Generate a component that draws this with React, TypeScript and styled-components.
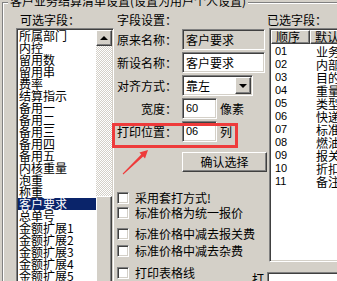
import React from 'react';
import styled, { createGlobalStyle, css } from 'styled-components';

const GlobalStyle = createGlobalStyle`
  html, body {
    margin: 0;
    padding: 0;
  }
  body {
    width: 337px;
    height: 281px;
    overflow: hidden;
    background: #d4d0c8;
    color: #000;
    font-family: 'Noto Sans CJK SC', 'Noto Sans', sans-serif;
    font-size: 12px;
  }
`;

// classic win2k bevels
const sunken = css`
  box-sizing: border-box;
  border: 1px solid;
  border-color: #808080 #fff #fff #808080;
  box-shadow: inset 1px 1px 0 #404040, inset -1px -1px 0 #d4d0c8;
  padding: 1px;
`;

const raised = css`
  box-sizing: border-box;
  border: 1px solid;
  border-color: #fff #404040 #404040 #fff;
  box-shadow: inset -1px -1px 0 #808080;
  background: #d4d0c8;
`;

const Page = styled.div`
  position: relative;
  width: 337px;
  height: 281px;
  overflow: hidden;
`;

const Frame = styled.div`
  position: relative;
  box-sizing: border-box;
  margin: 2px 0 0 2px;
  height: 300px;
  padding-top: 10px;
  border-top: 1px solid #808080;
  border-left: 1px solid #808080;
  box-shadow: inset 1px 1px 0 #fff;
  display: flex;
  align-items: flex-start;
`;

const Legend = styled.span`
  position: absolute;
  top: -9px;
  left: 5px;
  padding: 0 2px;
  background: #d4d0c8;
  line-height: 14px;
  white-space: nowrap;
`;

const Caption = styled.div<{ $pad?: number }>`
  height: 14px;
  line-height: 14px;
  padding-left: ${(p) => p.$pad ?? 0}px;
  white-space: nowrap;
`;

/* ---------- left: available fields ---------- */

const LeftCol = styled.div`
  width: 98px;
  margin-left: 13px;
  display: flex;
  flex-direction: column;
`;

const ListBox = styled.div`
  ${sunken};
  margin-top: 1px;
  width: 98px;
  height: 270px;
  background: #fff;
  display: flex;
`;

const Items = styled.div`
  flex: 1;
  overflow: hidden;
`;

const Item = styled.div<{ $selected?: boolean }>`
  height: 12px;
  line-height: 12px;
  padding-left: 1px;
  white-space: nowrap;
  background: ${(p) => (p.$selected ? '#0a246a' : 'transparent')};
  color: ${(p) => (p.$selected ? '#fff' : '#000')};
`;

const ScrollBar = styled.div`
  width: 16px;
  display: flex;
  flex-direction: column;
`;

const ScrollButton = styled.div`
  ${raised};
  height: 16px;
  display: flex;
  align-items: center;
  justify-content: center;
`;

const UpArrow = styled.div`
  width: 0;
  height: 0;
  border-left: 4px solid transparent;
  border-right: 4px solid transparent;
  border-bottom: 4px solid #000;
  margin-top: -1px;
`;

const DownArrow = styled.div`
  width: 0;
  height: 0;
  border-left: 4px solid transparent;
  border-right: 4px solid transparent;
  border-top: 4px solid #000;
`;

const Track = styled.div<{ $h: number }>`
  height: ${(p) => p.$h}px;
  background: repeating-conic-gradient(#d4d0c8 0 25%, #fff 0 50%) 0 0 / 2px 2px;
`;

const Thumb = styled.div`
  ${raised};
  flex: 1;
`;

/* ---------- middle: field settings ---------- */

const MidCol = styled.div`
  box-sizing: border-box;
  width: 159px;
  padding-left: 3px;
  display: flex;
  flex-direction: column;
`;

const FormGrid = styled.div`
  margin-top: 2px;
  display: grid;
  grid-template-columns: 60px auto;
  grid-auto-rows: 21px;
  column-gap: 5px;
  row-gap: 2px;
`;

const FieldLabel = styled.div`
  text-align: right;
  align-self: center;
  line-height: 14px;
  white-space: nowrap;
`;

const FieldRow = styled.div`
  display: flex;
  align-items: center;
`;

const Field = styled.div<{ $w: number; $readonly?: boolean; $num?: boolean }>`
  ${sunken};
  width: ${(p) => p.$w}px;
  height: 21px;
  padding: 1px 3px;
  line-height: 17px;
  white-space: nowrap;
  overflow: hidden;
  background: ${(p) => (p.$readonly ? '#d4d0c8' : '#fff')};
  font-family: ${(p) =>
    p.$num ? "'Liberation Sans', Arial, sans-serif" : "'Noto Sans CJK SC', sans-serif"};
  font-size: ${(p) => (p.$num ? 11 : 12)}px;
`;

const Unit = styled.span`
  margin-left: 3px;
  line-height: 14px;
`;

const Combo = styled.div`
  ${sunken};
  width: 71px;
  height: 21px;
  background: #fff;
  display: flex;
`;

const ComboText = styled.div`
  flex: 1;
  padding-left: 2px;
  line-height: 17px;
`;

const ComboButton = styled(ScrollButton)`
  width: 16px;
  height: 17px;
`;

const Button = styled.div`
  ${raised};
  margin: 10px 0 0 65px;
  width: 85px;
  height: 20px;
  line-height: 18px;
  text-align: center;
`;

const Checks = styled.div`
  margin-top: 20px;
  display: flex;
  flex-direction: column;
`;

const CheckRow = styled.div<{ $mt: number }>`
  margin-top: ${(p) => p.$mt}px;
  height: 12px;
  display: flex;
  align-items: center;
  white-space: nowrap;
`;

const CheckBox = styled.div`
  ${sunken};
  width: 12px;
  height: 12px;
  background: #fff;
  margin-right: 6px;
  flex-shrink: 0;
`;

const CheckText = styled.span`
  line-height: 12px;
`;

/* ---------- right: chosen fields ---------- */

const RightCol = styled.div`
  flex: 1;
  display: flex;
  flex-direction: column;
`;

const Table = styled.div`
  ${sunken};
  margin: 1px 0 0 2px;
  width: 120px;
  height: 234px;
  flex-shrink: 0;
  background: #fff;
  overflow: hidden;
`;

const HeaderRow = styled.div`
  display: flex;
  height: 14px;
`;

const HeaderCell = styled.div<{ $w: number }>`
  ${raised};
  width: ${(p) => p.$w}px;
  flex-shrink: 0;
  padding-left: 4px;
  line-height: 12px;
  white-space: nowrap;
  overflow: hidden;
`;

const Rows = styled.div`
  padding-top: 1px;
`;

const Row = styled.div`
  display: flex;
  height: 13px;
  line-height: 13px;
  white-space: nowrap;
`;

const OrderCell = styled.div`
  width: 39px;
  padding-left: 4px;
  box-sizing: border-box;
  font-family: 'Liberation Sans', Arial, sans-serif;
  font-size: 11px;
`;

const NameCell = styled.div`
  padding-left: 6px;
`;

const BottomRow = styled.div`
  margin: 10px 0 0 -15px;
  display: flex;
  align-items: flex-start;
`;

const BottomLabel = styled.span`
  width: 12px;
  margin-right: 3px;
  line-height: 14px;
`;

/* ---------- annotation overlays ---------- */

const RedBox = styled.div`
  position: absolute;
  left: 112px;
  top: 123px;
  width: 126px;
  height: 25px;
  box-sizing: border-box;
  border: 3px solid #ee3b3b;
  pointer-events: none;
`;

const ArrowSvg = styled.svg`
  position: absolute;
  left: 0;
  top: 0;
  pointer-events: none;
`;

const available = [
  '所属部门', '内控', '留用数', '留用串', '费率', '结算指示', '备用一', '备用二',
  '备用三', '备用四', '备用五', '内核重量', '泡重', '称重', '客户要求', '总单号',
  '金额扩展1', '金额扩展2', '金额扩展3', '金额扩展4', '金额扩展5',
];

const chosen = [
  ['01', '业务日期'], ['02', '内部单号'], ['03', '目的地'], ['04', '重量'],
  ['05', '类型'], ['06', '快递单号'], ['07', '标准价格'], ['08', '燃油附加'],
  ['09', '报关费'], ['10', '折扣'], ['11', '备注'],
];

const checks: [string, number][] = [
  ['采用套打方式!', 0],
  ['标准价格为统一报价', 3],
  ['标准价格中减去报关费', 9],
  ['标准价格中减去杂费', 5],
  ['打印表格线', 10],
];

const App: React.FC = () => {
  return (
    <>
      <GlobalStyle />
      <Page>
        <Frame>
          <Legend>客户业务结算清单设置(设置为用户个人设置)</Legend>

          <LeftCol>
            <Caption $pad={4}>可选字段：</Caption>
            <ListBox>
              <Items>
                {available.map((name) => (
                  <Item key={name} $selected={name === '客户要求'}>
                    {name}
                  </Item>
                ))}
              </Items>
              <ScrollBar>
                <ScrollButton>
                  <UpArrow />
                </ScrollButton>
                <Track $h={150} />
                <Thumb />
              </ScrollBar>
            </ListBox>
          </LeftCol>

          <MidCol>
            <Caption>字段设置：</Caption>
            <FormGrid>
              <FieldLabel>原来名称：</FieldLabel>
              <Field $w={83} $readonly>客户要求</Field>

              <FieldLabel>新设名称：</FieldLabel>
              <Field $w={83}>客户要求</Field>

              <FieldLabel>对齐方式：</FieldLabel>
              <Combo>
                <ComboText>靠左</ComboText>
                <ComboButton>
                  <DownArrow />
                </ComboButton>
              </Combo>

              <FieldLabel>宽度：</FieldLabel>
              <FieldRow>
                <Field $w={35} $num>60</Field>
                <Unit>像素</Unit>
              </FieldRow>

              <FieldLabel>打印位置：</FieldLabel>
              <FieldRow>
                <Field $w={35} $num>06</Field>
                <Unit>列</Unit>
              </FieldRow>
            </FormGrid>
            <Button>确认选择</Button>
            <Checks>
              {checks.map(([text, mt]) => (
                <CheckRow key={text} $mt={mt}>
                  <CheckBox />
                  <CheckText>{text}</CheckText>
                </CheckRow>
              ))}
            </Checks>
          </MidCol>

          <RightCol>
            <Caption>已选字段：</Caption>
            <Table>
              <HeaderRow>
                <HeaderCell $w={39}>顺序</HeaderCell>
                <HeaderCell $w={80}>默认名称</HeaderCell>
              </HeaderRow>
              <Rows>
                {chosen.map(([no, name]) => (
                  <Row key={no}>
                    <OrderCell>{no}</OrderCell>
                    <NameCell>{name}</NameCell>
                  </Row>
                ))}
              </Rows>
            </Table>
            <BottomRow>
              <BottomLabel>打</BottomLabel>
              <Field $w={80} />
            </BottomRow>
          </RightCol>
        </Frame>

        <RedBox />
        <ArrowSvg width="337" height="281" viewBox="0 0 337 281">
          <polygon
            points="122.7,173.6 141.2,154.4 139.4,152.6 148,150 145,158.4 143.2,156.6 123.3,174.4"
            fill="#ee3b3b"
          />
        </ArrowSvg>
      </Page>
    </>
  );
};

export default App;
